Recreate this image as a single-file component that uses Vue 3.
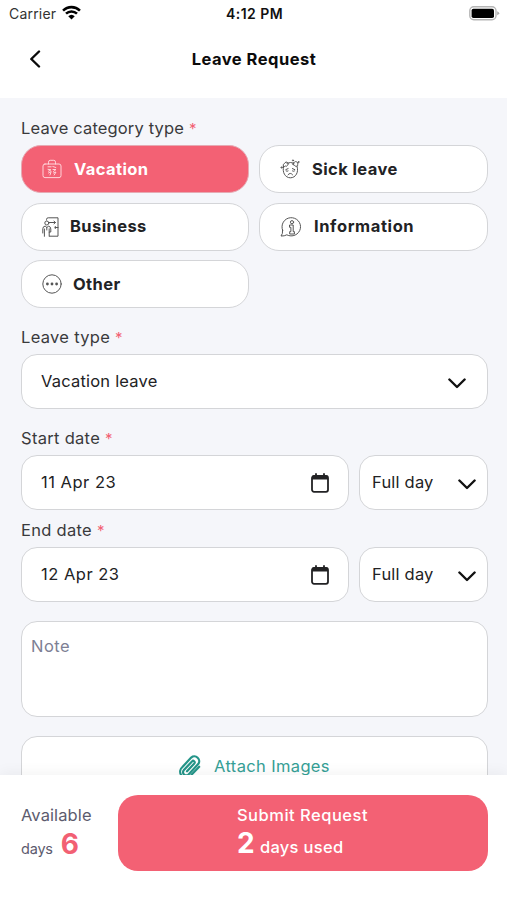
<script setup>
import { ref } from 'vue'

const categories = [
  { id: 'vacation', label: 'Vacation' },
  { id: 'sick', label: 'Sick leave' },
  { id: 'business', label: 'Business' },
  { id: 'information', label: 'Information' },
  { id: 'other', label: 'Other' },
]
const selected = ref('vacation')

const dates = [
  { id: 'start', label: 'Start date', value: '11 Apr 23', span: 'Full day' },
  { id: 'end', label: 'End date', value: '12 Apr 23', span: 'Full day' },
]
</script>

<template>
  <div class="screen">
    <div class="status">
      <div class="carrier">
        <span>Carrier</span>
        <svg class="wifi" viewBox="0 0 18 14">
          <path d="M1 5.2a11.4 11.4 0 0 1 16 0" />
          <path d="M3.8 8.1a7.4 7.4 0 0 1 10.4 0" />
          <path class="solid" d="M5.900 10.600a4.500 4.500 0 0 1 6.200 0L9 13.600z" />
        </svg>
      </div>
      <span class="clock">4:12 PM</span>
      <svg class="battery" viewBox="0 0 31 15">
        <rect class="case" x="0.8" y="0.8" width="26.2" height="13" rx="4" />
        <rect class="charge" x="2.6" y="2.8" width="22.4" height="9.2" rx="1.8" />
        <path class="tip" d="M28.200 5.300q2 .8 2 2t-2 2z" />
      </svg>
    </div>

    <header class="header">
      <svg class="back" viewBox="0 0 12 18"><path d="M10 1.500 2.300 9 10 16.500" /></svg>
      <h1>Leave Request</h1>
    </header>

    <main class="form">
      <div class="label category-label">Leave category type <i>*</i></div>
      <div class="categories">
        <button
          v-for="c in categories"
          :key="c.id"
          class="category"
          :class="[c.id, { active: selected === c.id }]"
          @click="selected = c.id"
        >
          <svg v-if="c.id === 'vacation'" class="icon" viewBox="0 0 20 20">
            <rect x="1" y="5" width="18" height="13.6" rx="2" />
            <path d="M6.500 5V3.200Q6.500 1.300 8.200 1.300h3.600q1.700 0 1.700 1.900V5" />
            <path d="M6 7.800h3.200M10.800 7.500l3 1M6 10.300l3 .5-2.500 1.400M11 10.500h3l-2.500 2M6.500 14l2.700-1.500L8 16M11.500 14l2.500-1-1.800 3" />
          </svg>
          <svg v-else-if="c.id === 'sick'" class="icon" viewBox="0 0 20 20">
            <path d="M3.600 7.400C2 13 5 18.800 10.400 18.800S19 13 17 7.400M7 4.200q3.600-1.500 7 0" />
            <path d="M3.300 7.800q-.8-3 1.500-3.700 1-2 2.700-.6 1.600 1.200.2 2.700-1 1.600-2.400.8-.8 1-2 .8zM13 5.200q-.3-2 1.600-2 1-1.200 2.200-.2 1.800.8.9 2.400.4 1.800-1.100 1.800-1.500.5-1.900-.8-1.400.2-1.700-1.200z" />
            <path d="M5.800 10.600l2.300-1M14.800 10.600l-2.400-1M6.100 12q1.100.7 2 0M12.500 12q1.100.7 2 0M8 15.800q2.300-3 4.600 0" />
            <circle cx="1.500" cy="8.500" r=".6" /><circle cx="13" cy="1.400" r=".6" /><circle cx="18.500" cy="3" r=".4" />
          </svg>
          <svg v-else-if="c.id === 'business'" class="icon" viewBox="0 0 17 20">
            <path d="M4.500 3V2.500Q4.500.8 6.200.8H16v18.400H7.500M7.200 5.500h6M12 4.200l1.500 1.300L12 6.800M16 10.500h-3M13.300 9.500v2" />
            <circle cx="4.800" cy="6" r="2" />
            <path d="M.8 16v-4.200q0-2.500 2.600-2.800l1.400 1.800L6.400 9Q8.800 9.600 8.800 12v3H7.200v4.200M2.400 12v7.300M4.800 10.800V13M7.200 11.800V15" />
          </svg>
          <svg v-else-if="c.id === 'information'" class="icon" viewBox="0 0 22 20">
            <path d="M2.600 13.200A9.300 9.100 0 1 1 6.800 17.800Q4.500 19.200 1 19q2-2 1.600-5.800z" />
            <circle cx="12" cy="5.200" r="1.600" />
            <path d="M9.900 8h3.300v6.600h1.200V17H9.700v-2.400h1.200v-4.300h-1z" />
          </svg>
          <svg v-else class="icon" viewBox="0 0 20 20">
            <circle cx="10" cy="10" r="9.200" />
            <circle class="dot" cx="5.400" cy="10" r="1.400" />
            <circle class="dot" cx="10" cy="10" r="1.400" />
            <circle class="dot" cx="14.600" cy="10" r="1.400" />
          </svg>
          <span>{{ c.label }}</span>
        </button>
      </div>

      <div class="label type-label">Leave type <i>*</i></div>
      <div class="field">
        <span>Vacation leave</span>
        <svg class="chevron" viewBox="0 0 18 11"><path d="M1.400 1.500 9 9l7.600-7.500" /></svg>
      </div>

      <template v-for="d in dates" :key="d.id">
        <div class="label" :class="d.id + '-label'">{{ d.label }} <i>*</i></div>
        <div class="date-row">
          <div class="field date">
            <span>{{ d.value }}</span>
            <svg class="calendar" viewBox="0 0 18 20">
              <rect x="1" y="3" width="16" height="15.800" rx="2" />
              <path class="band" d="M1 3.400q0-1 1.400-1h13.200q1.400 0 1.400 1v3.200H1z" />
              <path d="M5 .9v3M13 .9v3" />
            </svg>
          </div>
          <div class="field span">
            <span>{{ d.span }}</span>
            <svg class="chevron" viewBox="0 0 18 11"><path d="M1.400 1.500 9 9l7.600-7.500" /></svg>
          </div>
        </div>
      </template>

      <div class="note">Note</div>
      <div class="attach">
        <svg class="clip" viewBox="0 0 24 24">
          <path d="M9 16.300 16.300 8.400a1.500 1.500 0 0 0-2.300-2L5.900 14.900a3.200 3.200 0 0 0 4.700 4.500l9.600-10.300a4.800 4.800 0 0 0-7-6.500L4.400 12a6.200 6.200 0 0 0-1.300 8M13.500 19.700l7.700-8" />
        </svg>
        <span>Attach Images</span>
      </div>
    </main>

    <footer class="footer">
      <div class="available">
        <span class="caption">Available</span>
        <div class="count"><span>days</span><b>6</b></div>
      </div>
      <button class="submit">
        <span class="submit-text">
          <span class="title">Submit Request</span>
          <span class="used"><b>2</b><span>days used</span></span>
        </span>
      </button>
    </footer>
  </div>
</template>

<style>
body { margin: 0; }
</style>

<style scoped>
.screen {
  display: flex;
  flex-direction: column;
  height: 900px;
  overflow: hidden;
  background: #f5f6fa;
  color: #222224;
  font-family: Inter, "Liberation Sans", sans-serif;
  font-size: 16.5px;
  letter-spacing: 0.2px;
}
svg { flex: none; fill: none; stroke: currentColor; stroke-linecap: round; stroke-linejoin: round; }
button { font: inherit; letter-spacing: inherit; color: inherit; text-align: left; }

.status {
  display: grid;
  grid-template-columns: 1fr auto 1fr;
  align-items: center;
  height: 28px;
  padding: 0 7px 0 9px;
  background: #fff;
  font-size: 14px;
}
.status span { margin-top: -1px; }
.carrier { display: flex; align-items: center; gap: 6px; color: #333; }
.wifi { width: 19px; height: 15px; color: #000; stroke-width: 2.4; stroke-linecap: butt; margin-top: -3px; }
.wifi .solid { fill: #000; stroke: none; }
.clock { font-weight: 600; color: #111; letter-spacing: 0.45px; }
.battery { width: 31px; height: 15px; justify-self: end; margin-top: -1px; stroke: none; }
.battery .case { stroke: #b5b5b5; stroke-width: 1.4; }
.battery .charge { fill: #000; }
.battery .tip { fill: #aaa; }

.header {
  display: grid;
  grid-template-columns: 40px 1fr 40px;
  align-items: center;
  height: 70px;
  padding: 0 20px 0 21px;
  background: #fff;
  color: #0b0b0b;
}
.header h1 { margin: -8px 0 0; font-size: 16.5px; font-weight: 700; text-align: center; letter-spacing: 0.5px; }
.back { width: 12px; height: 18px; margin: -8px 0 0 8px; stroke-width: 2.4; }

.form { flex: 1; min-height: 0; overflow: hidden; padding: 0 19px 0 21px; }
.label { display: flex; gap: 5px; align-items: center; height: 24px; color: #3a3a3c; letter-spacing: 0.3px; }
.label i { font-style: normal; color: #f26073; font-size: 15px; }
.category-label { margin: 18px 0 5px; letter-spacing: 0.15px; }
.categories { display: grid; grid-template-columns: 228px 229px; grid-auto-rows: 48px; gap: 9.5px 10px; }
.category {
  display: flex;
  align-items: center;
  gap: 12px;
  padding: 0 20px;
  border: 1.5px solid #d4d5d8;
  border-radius: 20px;
  background: #fff;
  font-weight: 700;
  letter-spacing: 0.4px;
}
.category span { margin-top: -1px; }
.category.active { background: #f36174; color: #fff; border-color: #e6aab3; }
.icon { width: 20px; height: 20px; stroke-width: 1; color: #555; }
.icon .dot { fill: currentColor; stroke: none; }
.active .icon { color: #ffd5da; }
.business .icon { width: 17px; }
.business, .other { gap: 11px; }
.information { letter-spacing: 0.6px; }
.information .icon { width: 22px; }

.type-label { margin: 17px 0 5px; }
.field {
  display: flex;
  align-items: center;
  justify-content: space-between;
  box-sizing: border-box;
  height: 55px;
  padding: 0 21px 0 19px;
  border: 1.5px solid #d4d5d8;
  border-radius: 16px;
  background: #fff;
}
.field span { margin-top: -1px; }
.chevron { width: 18px; height: 11px; margin-top: 3px; stroke-width: 2.4; color: #111; }
.start-label { margin: 17px 0 5px; }
.end-label { margin: 8px 0 5px; }
.date-row { display: grid; grid-template-columns: 328px 129px; gap: 10px; }
.date { padding-right: 19px; letter-spacing: 0.5px; }
.calendar { width: 18px; height: 20px; margin-top: 1px; stroke-width: 1.8; }
.calendar .band { fill: currentColor; stroke: none; }
.span { padding: 0 11px 0 12px; }

.note {
  box-sizing: border-box;
  height: 96px;
  margin-top: 19px;
  padding: 14px 9px;
  border: 1.5px solid #d4d5d8;
  border-radius: 16px;
  background: #fff;
  color: #7d8094;
  letter-spacing: 0.5px;
}
.attach {
  display: flex;
  justify-content: center;
  gap: 12px;
  box-sizing: border-box;
  height: 62px;
  margin-top: 19px;
  padding: 19px 1px 0 0;
  border: 1.5px solid #d4d5d8;
  border-radius: 16px;
  background: #fff;
  color: #35a096;
  letter-spacing: 0.35px;
}
.clip { width: 24px; height: 24px; margin-top: -1px; stroke-width: 2.2; color: #249589; }

.footer {
  display: flex;
  box-sizing: border-box;
  height: 125px;
  padding: 20px 19px 0 21px;
  background: #fff;
  box-shadow: 0 -2px 14px rgba(0, 0, 0, 0.05);
  z-index: 1;
}
.available { width: 97px; color: #5c5b6e; }
.caption { display: block; margin-top: 9px; line-height: 22px; letter-spacing: 0.1px; }
.count { display: flex; align-items: baseline; gap: 8px; margin-top: 1px; line-height: 34px; font-size: 14.5px; letter-spacing: -0.2px; }
.count b { color: #f26073; font-size: 28px; font-weight: 700; }
.submit {
  display: flex;
  justify-content: center;
  flex: 1;
  height: 76px;
  padding: 0 1px 0 0;
  border: 0;
  border-radius: 20px;
  background: #f36174;
  color: #fff;
}
.submit-text { display: flex; flex-direction: column; }
.title { margin-top: 9px; line-height: 22px; font-weight: 500; letter-spacing: 0.5px; }
.used { display: flex; align-items: baseline; gap: 5px; line-height: 34px; font-weight: 500; letter-spacing: 0.3px; }
.used b { font-size: 28px; font-weight: 700; }
</style>
